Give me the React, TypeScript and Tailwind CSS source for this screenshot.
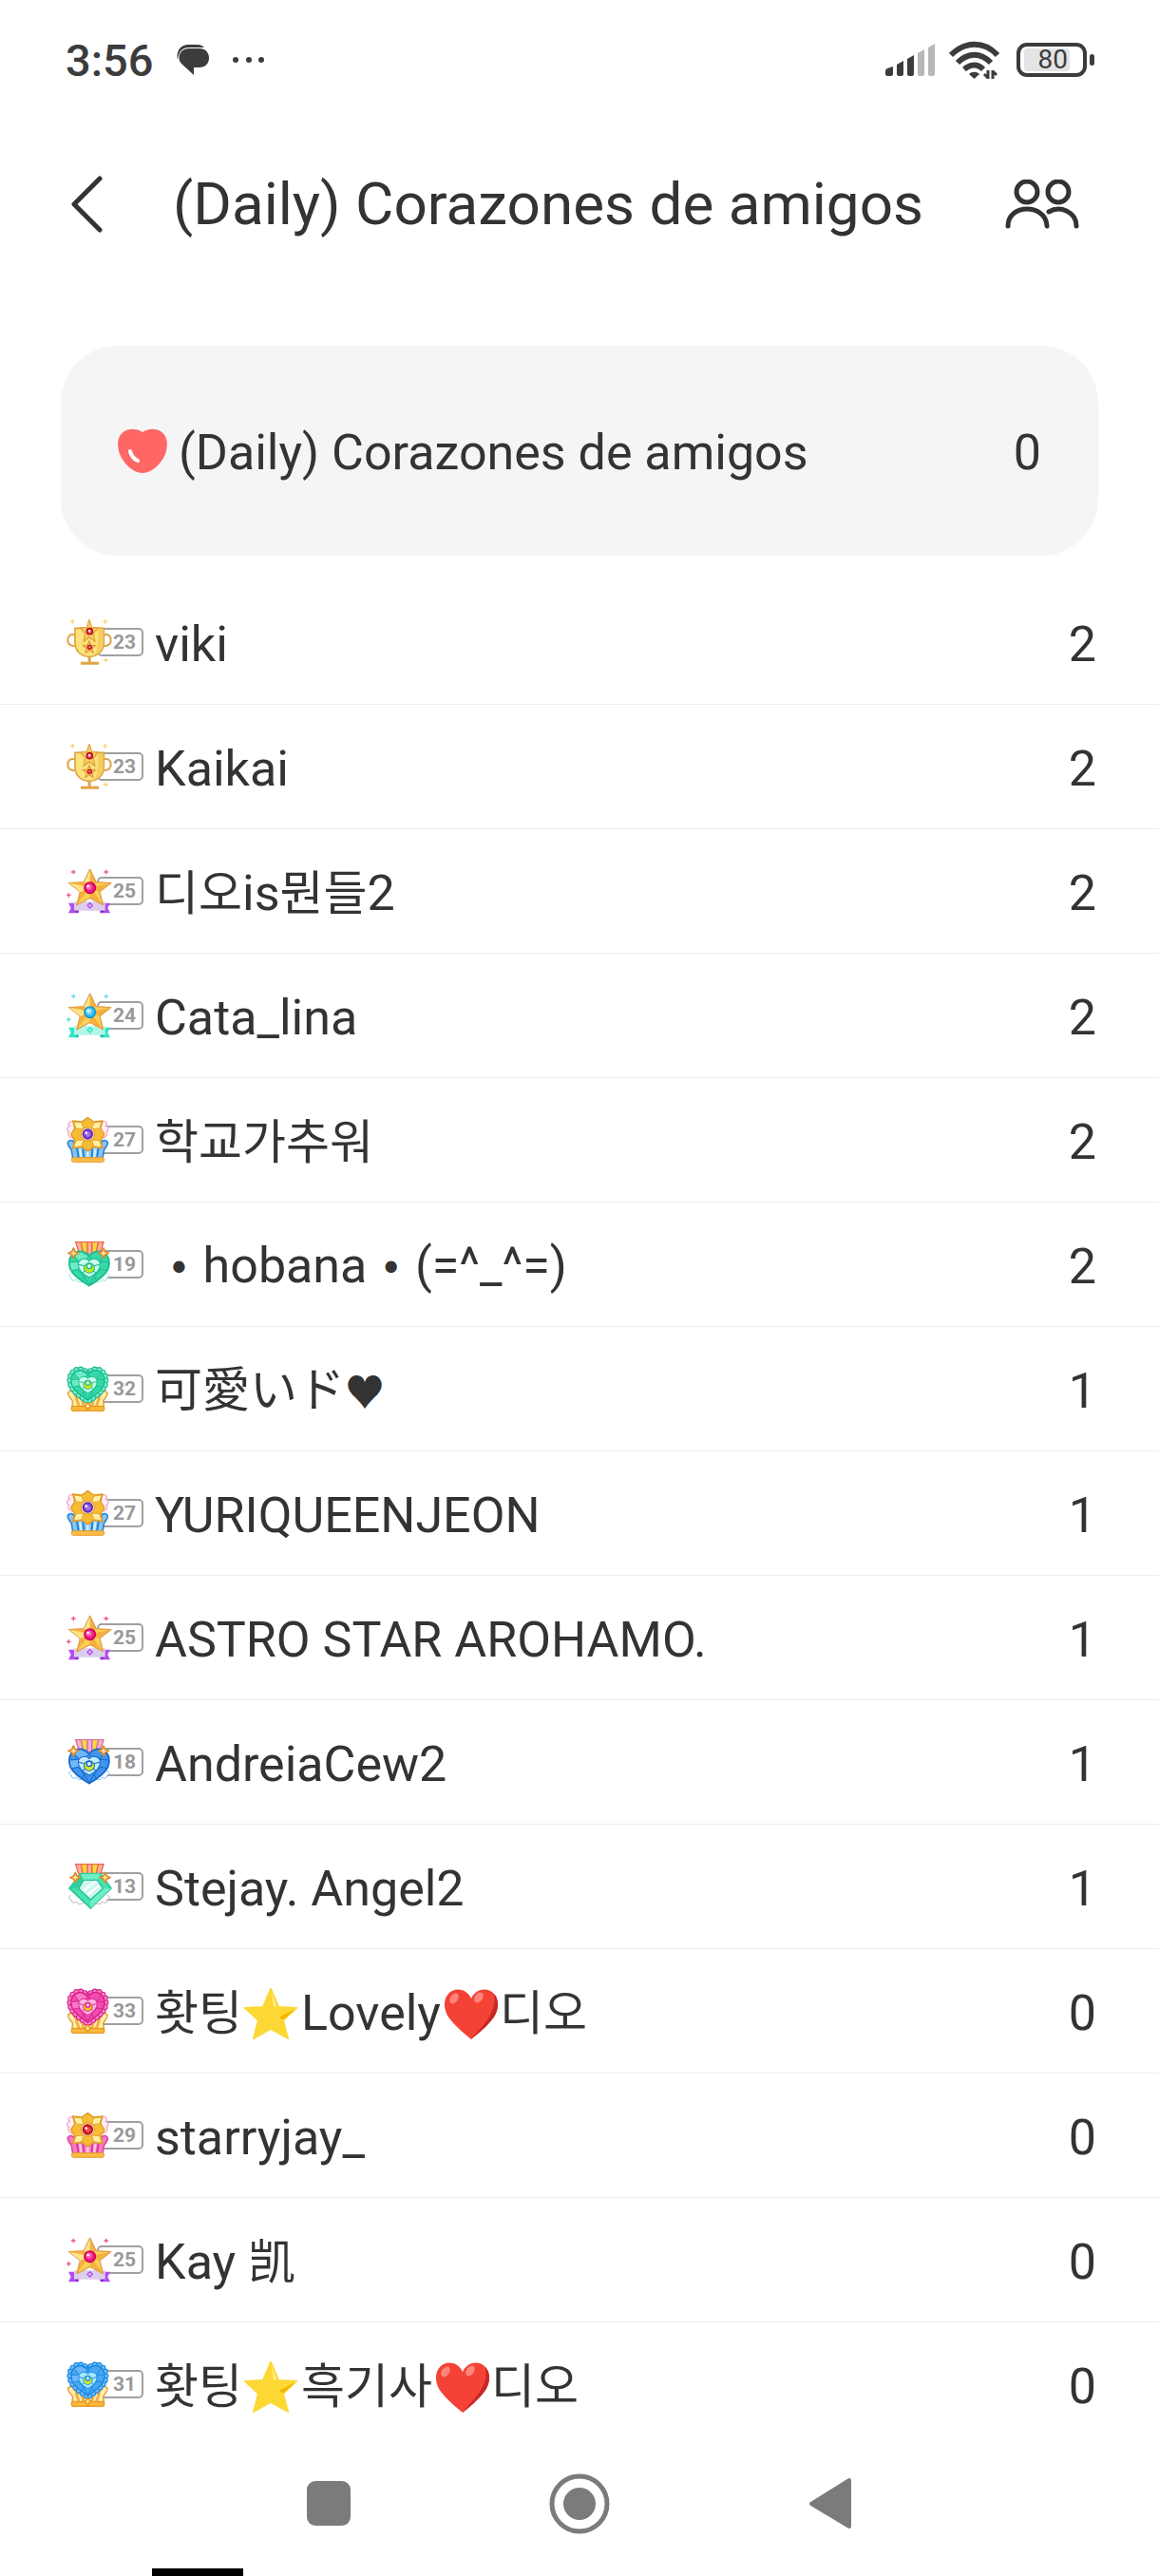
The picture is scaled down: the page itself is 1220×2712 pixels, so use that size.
import type { ReactNode } from 'react';

type Palette = { main: string; dark: string; light: string; pale: string; gem: string };

const teal: Palette = { main: '#35d9a8', dark: '#1cb98c', light: '#7df0d0', pale: '#c9fbec', gem: '#c6e81c' };
const blue: Palette = { main: '#3f95ee', dark: '#1769c6', light: '#7cc0fa', pale: '#c4ecff', gem: '#dbe81c' };
const sky: Palette = { main: '#4aa6f2', dark: '#0f8ae0', light: '#7cb8fa', pale: '#a8e6ff', gem: '#dbe81c' };
const pink: Palette = { main: '#f24aae', dark: '#d3208c', light: '#fb86cb', pale: '#ffb3df', gem: '#fbc21c' };

const HEART = 'M67 22C58 4 38 2 24 9C6 19 2 42 10 62C20 84 48 102 67 114C86 102 114 84 124 62C132 42 128 19 110 9C96 2 76 4 67 22Z';
const STAR = '0,-100 27,-36 95,-31 44,14 59,81 0,46 -59,81 -44,14 -95,-31 -27,-36';

function Plus({ x, y, color }: { x: number; y: number; color: string }) {
  return <path d={`M${x - 7} ${y}h14M${x} ${y - 7}v14`} stroke={color} strokeWidth="4" />;
}

function Sparkle({ x, y }: { x: number; y: number }) {
  return (
    <path
      d={`M${x} ${y - 16}l5 11 11 5-11 5-5 11-5-11-11-5 11-5z`}
      fill="#ffe0b0"
      stroke="#dc8a26"
      strokeWidth="5"
      strokeLinejoin="round"
    />
  );
}

function Trophy() {
  return (
    <>
      <Plus x={19} y={7} color="#f5d776" />
      <Plus x={122} y={7} color="#f5d776" />
      <Plus x={124} y={129} color="#f5d776" />
      <path d="M28 50C10 44 4 56 4 66C4 80 18 88 32 82M116 50C134 44 140 56 140 66C140 80 126 88 112 82" fill="none" stroke="#dfa544" strokeWidth="6" />
      <path d="M27 28H118V74C118 102 96 118 72 118C48 118 27 102 27 74Z" fill="#fbe27c" stroke="#dfa544" strokeWidth="5" />
      <path d="M100 32H114V74C114 92 104 106 88 112C98 96 100 76 100 32Z" fill="#f6cc5c" />
      <path d="M68 118h9v18h-9zM45 134h57v9h-57z" fill="#dfa544" />
      <polygon points={STAR} transform="translate(72 39) scale(.3 .38)" fill="#f8cf5e" stroke="#dfa040" strokeWidth="11" />
      <polygon points={STAR} transform="translate(72 89) scale(.21)" fill="#f8bf56" stroke="#e09c3c" strokeWidth="16" />
      <circle cx="73" cy="38" r="9" fill="#ef6b7c" stroke="#b80c1c" strokeWidth="5" />
      <circle cx="73" cy="88" r="6" fill="#ef7b7c" stroke="#b80c1c" strokeWidth="4" />
      <circle cx="72" cy="36" r="3" fill="#fff" />
    </>
  );
}

function StarRibbon({ kind }: { kind: 'purple' | 'aqua' }) {
  const p = kind === 'purple';
  const ribbon = p ? '#b24cf0' : '#2ce6c8';
  return (
    <>
      <Plus x={22} y={12} color={p ? '#f0559a' : '#74d6f2'} />
      <Plus x={125} y={12} color={p ? '#f0559a' : '#74d6f2'} />
      <Plus x={7} y={85} color={p ? '#f0559a' : '#4fe2dc'} />
      <path d="M6 110H38V142H6L14 126ZM138 110H106V142H138L130 126Z" fill={ribbon} />
      <path d="M24 106H122V134H24Z" fill={p ? '#dccdec' : '#b2f7e6'} />
      <path d="M24 134h16l-6 8zM122 134h-16l6 8z" fill={p ? '#8528c4' : '#12b89c'} />
      <polygon points={STAR} transform="translate(74 66) scale(.7 .62)" fill="#fcd052" stroke="#dd9f4c" strokeWidth="6" strokeLinejoin="round" />
      <path d="M74 6V61L92 44ZM139 47L74 61L104 75ZM115 115L74 61V94ZM33 115L74 61L44 75ZM9 47L74 61L56 44Z" fill="#f3a63a" opacity=".75" />
      <path d="M74 6V61L56 44ZM9 47L74 61L44 75Z" fill="#ffe994" opacity=".8" />
      <circle cx="74" cy="62" r="17" fill={p ? '#f51c84' : '#38c0f4'} stroke={p ? '#cc0460' : '#1298d8'} strokeWidth="5" />
      <circle cx="71" cy="59" r="9" fill={p ? '#ff66ae' : '#8fe2ff'} />
      <circle cx="68" cy="57" r="4" fill="#fff" />
      <path d="M74 110l8 8-8 8-8-8z" fill="none" stroke={ribbon} strokeWidth="4" />
    </>
  );
}

function FlowerCrown({ kind }: { kind: 'blue' | 'pink' }) {
  const b = kind === 'blue';
  return (
    <>
      <path
        d="M18 14C6 12 4 24 10 28C0 32 0 44 8 46C2 54 8 64 20 66H32V24ZM116 14C128 12 130 24 124 28C134 32 134 44 126 46C132 54 126 64 114 66H102V24Z"
        fill="#fff0f8"
        stroke="#f6a6cd"
        strokeWidth="4"
      />
      <path
        d="M4 80C8 70 22 72 24 82L40 92H94L110 82C112 72 126 70 130 80C132 92 122 94 118 106L114 130H20L16 106C12 94 2 92 4 80Z"
        fill={b ? '#8cc2f8' : '#f97cc4'}
        stroke={b ? '#2b86d2' : '#e0489c'}
        strokeWidth="5"
      />
      <path d="M32 92L38 130M102 92L96 130M52 100L54 130M82 100L80 130" stroke={b ? '#1d86da' : '#d93a94'} strokeWidth="6" />
      <path d="M43 100L47 128M91 100L87 128M67 104V128" stroke={b ? '#cdf2ff' : '#ffc1e2'} strokeWidth="8" />
      <rect x="16" y="128" width="103" height="14" rx="6" fill="#fbbc48" stroke="#e79b2c" strokeWidth="3" />
      <path
        d="M67 2L86 15L114 12L108 36L120 54L108 74L114 99L86 94L67 108L48 94L20 99L26 74L14 54L26 36L20 12L48 15Z"
        fill="#f8bc34"
        stroke="#dc9a28"
        strokeWidth="4"
        strokeLinejoin="round"
      />
      <path d="M23 15L48 18L54 38L30 36ZM111 15L86 18L80 38L104 36ZM23 96L48 92L54 72L30 74ZM111 96L86 92L80 72L104 74Z" fill="#fff0a4" stroke="#e5a834" strokeWidth="3" />
      <circle cx="67" cy="54" r="21" fill="#fde9d8" stroke="#dc9a28" strokeWidth="3" />
      <circle cx="67" cy="54" r="15" fill={b ? '#8348d8' : '#e0242c'} stroke={b ? '#5c22a8' : '#a80c14'} strokeWidth="4" />
      <circle cx="68" cy="55" r="7" fill={b ? '#a878f0' : '#f4505a'} />
      <circle cx="62" cy="50" r="4" fill="#fff" />
    </>
  );
}

function HeartJewel({ c }: { c: Palette }) {
  return (
    <>
      <path d={HEART} fill={c.main} stroke={c.dark} strokeWidth="5" />
      <path d="M67 24L40 8L18 18L36 38ZM36 38L8 40L14 66L34 62Z" fill={c.light} opacity=".8" />
      <path d="M67 24L36 38L8 40M36 38L18 16M34 62L14 66M34 62L52 84L46 98M67 24L98 38L126 40M98 38L116 16M100 62L120 66M100 62L82 84L88 98M52 84L67 112L82 84" fill="none" stroke={c.dark} strokeWidth="3" />
      <path d="M67 36C58 24 38 28 34 42C32 62 44 76 67 88C90 76 102 62 100 42C96 28 76 24 67 36Z" fill={c.pale} stroke={c.dark} strokeWidth="3" />
      <path d="M34 46L54 52M100 46L80 52M46 74L56 66M88 74L78 66" stroke={c.dark} strokeWidth="3" />
      <circle cx="67" cy="58" r="16" fill={c.gem} stroke={c.dark} strokeWidth="3" />
      <circle cx="67" cy="52" r="8" fill={c.pale} stroke={c.dark} strokeWidth="4" />
      <circle cx="67" cy="51" r="3" fill="#fff" />
    </>
  );
}

function MedalRibbon({ tint }: { tint: 'coral' | 'rose' }) {
  return (
    <>
      <path d="M29 2H117L105 40H41Z" fill={tint === 'coral' ? '#ffb0a0' : '#f8b0d4'} stroke={tint === 'coral' ? '#e86654' : '#d8709c'} strokeWidth="4" />
      <path d="M48 4H62V38H54ZM98 4H84V38H92Z" fill="#f9da28" />
      <path d="M46 4L53 38M66 4V38M80 4V38M100 4L93 38" stroke={tint === 'coral' ? '#e2683c' : '#c868a0'} strokeWidth="4" />
    </>
  );
}

function Wings({ color }: { color: string }) {
  return (
    <path
      d="M14 100C4 104 8 114 16 114C14 124 26 126 32 120C34 130 48 130 54 122M128 100C140 104 136 114 128 114C130 124 118 126 112 120C110 130 96 130 90 122"
      fill="#fff"
      stroke={color}
      strokeWidth="3"
    />
  );
}

function HeartMedal({ c, tint }: { c: Palette; tint: 'coral' | 'rose' }) {
  return (
    <>
      <MedalRibbon tint={tint} />
      <Wings color={c.light} />
      <g transform="translate(2 26) scale(1.04 1)">
        <HeartJewel c={c} />
      </g>
      <Sparkle x={22} y={37} />
      <Sparkle x={117} y={37} />
    </>
  );
}

function GemMedal() {
  return (
    <>
      <MedalRibbon tint="coral" />
      <Wings color="#b4b8bc" />
      <path d="M45 32H107L141 78L76 141L9 78Z" fill="#46e2b0" stroke="#26c294" strokeWidth="5" strokeLinejoin="round" />
      <path d="M45 32L54 52L40 79L9 78Z" fill="#2fcf9e" />
      <path d="M45 32H107L98 52H54ZM141 78L113 79L76 114V141Z" fill="#7bf2cc" opacity=".8" />
      <path d="M54 52H98L115 79L76 114L38 79Z" fill="#cdf8ee" stroke="#26c294" strokeWidth="4" />
      <path d="M54 86L92 56M66 98L104 70" stroke="#fff" strokeWidth="7" />
      <Sparkle x={28} y={44} />
      <Sparkle x={122} y={44} />
    </>
  );
}

function HeartCrown({ c }: { c: Palette }) {
  return (
    <>
      <path
        d="M5 86C8 78 20 78 24 88C28 104 46 104 67 104C88 104 106 104 110 88C114 78 126 78 129 86C130 98 120 100 116 112L118 128H18L20 112C14 100 4 98 5 86Z"
        fill="#fff0b4"
        stroke="#e8a636"
        strokeWidth="5"
      />
      <path d="M30 100L40 128M104 100L94 128M50 110L54 128M84 110L80 128" stroke="#f2b040" strokeWidth="9" />
      <rect x="16" y="128" width="103" height="14" rx="6" fill="#fbb93c" stroke="#e59a26" strokeWidth="4" />
      {/* lace edge: rows of round dots behind the heart */}
      <g transform="translate(5 6) scale(.93)" fill="none" strokeLinecap="round" strokeDasharray="0 15">
        <path d={HEART} stroke={c.dark} strokeWidth="20" />
        <path d={HEART} stroke={c.light} strokeWidth="13" />
      </g>
      <g transform="translate(9 9) scale(.87)">
        <HeartJewel c={c} />
      </g>
      <path d="M67 116l9 11-9 11-9-11z" fill="#ffe08c" stroke="#e08c1c" strokeWidth="4" />
    </>
  );
}

const badges: Record<string, ReactNode> = {
  trophy: <Trophy />,
  starPurple: <StarRibbon kind="purple" />,
  starAqua: <StarRibbon kind="aqua" />,
  flowerBlue: <FlowerCrown kind="blue" />,
  flowerPink: <FlowerCrown kind="pink" />,
  heartTeal: <HeartMedal c={teal} tint="coral" />,
  heartBlue: <HeartMedal c={blue} tint="rose" />,
  gem: <GemMedal />,
  crownTeal: <HeartCrown c={teal} />,
  crownPink: <HeartCrown c={pink} />,
  crownSky: <HeartCrown c={sky} />,
};

function LevelBadge({ icon, level }: { icon: string; level: number }) {
  return (
    <div className="flex shrink-0 items-center">
      <svg viewBox="0 0 144 144" className="relative z-10 size-12" aria-hidden="true">
        {badges[icon]}
      </svg>
      <span className="-ml-4 flex h-[30px] w-[49px] items-center justify-end rounded-[5px] border-2 border-[#a0a0a0] bg-white pr-1.5 text-[21px] leading-none font-bold text-[#999]">
        {level}
      </span>
    </div>
  );
}

function StarEmoji() {
  return (
    <svg viewBox="0 0 56 56" className="mr-1 ml-0.5 size-14" role="img" aria-label="⭐">
      <path d="M28 2L36 21L55 22L41 35L46 54L28 44L10 54L15 35L1 22L20 21Z" fill="#fdd835" stroke="#fdd835" strokeWidth="2" strokeLinejoin="round" />
      <path d="M29 6L31 20L34 21Z" fill="#fff59d" />
      <path d="M54 23L38 31C37 34 41 35 44 32Z" fill="#f4b400" />
    </svg>
  );
}

function HeartEmoji() {
  return (
    <svg viewBox="0 0 60 56" className="ml-0.5 h-14 w-[60px]" role="img" aria-label="❤️">
      <path d="M30 12C25 1 12 0 6 7C-1 15 2 27 8 34C14 42 24 50 30 55C36 50 46 42 52 34C58 27 61 15 54 7C48 0 35 1 30 12Z" fill="#f44336" />
      <path d="M54 7C61 15 58 27 52 34C46 42 36 50 30 55C40 42 58 28 54 7Z" fill="#c62828" />
      <ellipse cx="12" cy="12" rx="4" ry="6" transform="rotate(35 12 12)" fill="#ff847a" />
      <ellipse cx="38" cy="11" rx="4" ry="6" transform="rotate(35 38 11)" fill="#ff847a" />
    </svg>
  );
}

function Cjk({ children }: { children: ReactNode }) {
  return <span className="text-[50px]">{children}</span>;
}

function Bullet() {
  return <span className="font-['DejaVu_Sans',sans-serif] text-[42px]">•</span>;
}

const friends: { icon: string; level: number; name: ReactNode; hearts: number }[] = [
  { icon: 'trophy', level: 23, name: 'viki', hearts: 2 },
  { icon: 'trophy', level: 23, name: 'Kaikai', hearts: 2 },
  { icon: 'starPurple', level: 25, name: <><Cjk>디오</Cjk>is<Cjk>뭔들</Cjk>2</>, hearts: 2 },
  { icon: 'starAqua', level: 24, name: 'Cata_lina', hearts: 2 },
  { icon: 'flowerBlue', level: 27, name: <Cjk>학교가추워</Cjk>, hearts: 2 },
  { icon: 'heartTeal', level: 19, name: <>{'\u00a0'}<Bullet />{' hobana '}<Bullet />{' (=^_^=)'}</>, hearts: 2 },
  { icon: 'crownTeal', level: 32, name: <><Cjk>可愛いド</Cjk><span className="text-[42px]">♥</span></>, hearts: 1 },
  { icon: 'flowerBlue', level: 27, name: 'YURIQUEENJEON', hearts: 1 },
  { icon: 'starPurple', level: 25, name: 'ASTRO STAR AROHAMO.', hearts: 1 },
  { icon: 'heartBlue', level: 18, name: 'AndreiaCew2', hearts: 1 },
  { icon: 'gem', level: 13, name: 'Stejay. Angel2', hearts: 1 },
  { icon: 'crownPink', level: 33, name: <><Cjk>홧팅</Cjk><StarEmoji />Lovely<HeartEmoji /><Cjk>디오</Cjk></>, hearts: 0 },
  { icon: 'flowerPink', level: 29, name: 'starryjay_', hearts: 0 },
  { icon: 'starPurple', level: 25, name: <>Kay <Cjk>凯</Cjk></>, hearts: 0 },
  { icon: 'crownSky', level: 31, name: <><Cjk>홧팅</Cjk><StarEmoji /><Cjk>흑기사</Cjk><HeartEmoji /><Cjk>디오</Cjk></>, hearts: 0 },
];

function StatusBar() {
  return (
    <div className="flex h-[126px] items-center justify-between pr-[68px] pl-[69px] text-[#3c3c3c]">
      <div className="flex items-center">
        <span className="text-[47px] leading-none font-medium">3:56</span>
        <svg viewBox="0 0 34 34" className="ml-6 size-[34px]" fill="currentColor" aria-hidden="true">
          <path d="M13 5H24C30 5 34 9 34 15C34 21 30 25 24 25H18V33L6 22C3 19 2.500 17 2.500 15C2.500 9 7 5 13 5Z" />
          <path d="M1 17C-1 8 4 1 12 1H22C25 1 27 2 29 4H13C6 4 2 8 1 17Z" />
        </svg>
        <svg viewBox="0 0 36 8" className="ml-6 h-2 w-9" fill="currentColor" aria-hidden="true">
          <circle cx="4" cy="4" r="3" />
          <circle cx="18" cy="4" r="3" />
          <circle cx="31" cy="4" r="3" />
        </svg>
      </div>
      <div className="flex items-center">
        <svg viewBox="0 0 52 34" className="h-[34px] w-[52px]" fill="currentColor" aria-hidden="true">
          <path d="M0 29Q0 27 2 26L8 24V32Q8 34 6 34H2Q0 34 0 32ZM12 22L19 18V32Q19 34 17 34H14Q12 34 12 32ZM23 16L30 12V32Q30 34 28 34H25Q23 34 23 32Z" />
          <path d="M34 10L41 6V32Q41 34 39 34H36Q34 34 34 32ZM45 4L52 0V32Q52 34 50 34H47Q45 34 45 32Z" fill="#b8b8b8" />
        </svg>
        <svg viewBox="0 0 53 40" className="ml-[15px] h-10 w-[53px]" fill="none" stroke="currentColor" strokeWidth="6" aria-hidden="true">
          <path d="M2 15C17 0 37 0 51 15M9 23C20 12 33 12 44 23M16 30C23 24 30 24 36 30" />
          <path d="M21 35C24 32 29 32 32 35L26.500 40Z" fill="currentColor" stroke="none" />
          <path d="M41 31V40M46 40V31M41 39L37 35M46 32L50 36" strokeWidth="3" />
        </svg>
        <div className="ml-[18px] flex items-center">
          <div className="flex h-9 w-[74px] items-center rounded-[11px] border-4 border-current p-1">
            <span className="flex h-6 w-12 items-center justify-end rounded-sm bg-[#e4e4e4] pr-0.5 text-[28px] leading-none">80</span>
          </div>
          <span className="ml-[3px] h-3 w-[5px] rounded-sm bg-current" />
        </div>
      </div>
    </div>
  );
}

export default function App() {
  return (
    <div className="bg-white font-[Roboto,'Noto_Sans_CJK_KR','Noto_Sans_CJK_SC',sans-serif] text-[#333]">
      <StatusBar />

      <header className="flex h-[178px] items-center pr-[84px] pl-[74px]">
        <button type="button" aria-label="Atrás">
          <svg viewBox="0 0 34 60" className="h-[60px] w-[34px]" fill="none" stroke="currentColor" strokeWidth="5" strokeLinecap="round" strokeLinejoin="round">
            <path d="M31 3L4 30L31 57" />
          </svg>
        </button>
        <h1 className="ml-[74px] flex-1 text-[62px] leading-none whitespace-nowrap">(Daily) Corazones de amigos</h1>
        <button type="button" aria-label="Amigos">
          <svg viewBox="0 0 78 52" className="h-[52px] w-[78px]" fill="none" stroke="currentColor" strokeWidth="5" strokeLinecap="round">
            <circle cx="23" cy="13" r="11" />
            <circle cx="56" cy="13" r="11" />
            <path d="M3 49C3 25 43 25 44 49M46 34C58 27 75 34 75 49" />
          </svg>
        </button>
      </header>

      <main>
        <section className="mx-16 mt-15 flex h-[221px] items-center justify-between rounded-[60px] bg-[#f5f5f5] px-[60px] text-[52px] leading-none">
          <div className="flex items-center">
            <svg viewBox="0 0 52 47" className="mr-3 h-[47px] w-[52px]" aria-hidden="true">
              <path d="M26 4C20 0 12 0 7 3C-1 8-1 18 2 27C6 37 16 47 26 47C36 47 46 37 50 27C53 18 53 8 45 3C40 0 32 0 26 4Z" fill="#ff6666" />
              <path d="M13 24C14 29 17 32 21 34" fill="none" stroke="#fff" strokeWidth="4" strokeLinecap="round" />
            </svg>
            <h2 className="pt-1">(Daily) Corazones de amigos</h2>
          </div>
          <span className="pt-1">0</span>
        </section>

        <ul className="mt-[26px]">
          {friends.map((f, i) => (
            <li key={i} className="flex h-[131px] items-center border-b border-[#ececec] pr-[66px] pl-[70px] text-[52px] leading-[60px] last:border-transparent">
              <LevelBadge icon={f.icon} level={f.level} />
              <span className="ml-3 flex flex-1 items-baseline pt-1.5 whitespace-pre [&>svg]:self-center">{f.name}</span>
              <span className="pt-1.5">{f.hearts}</span>
            </li>
          ))}
        </ul>
      </main>

      <nav className="flex justify-center gap-[200px] py-7 text-[#7b7b7b]">
        <button type="button" aria-label="Recientes">
          <svg viewBox="0 0 64 64" className="size-16" fill="currentColor">
            <rect x="9" y="8" width="46" height="47" rx="9" />
          </svg>
        </button>
        <button type="button" aria-label="Inicio">
          <svg viewBox="0 0 64 64" className="size-16" fill="currentColor">
            <circle cx="32" cy="32" r="29" fill="none" stroke="currentColor" strokeWidth="5" />
            <circle cx="32" cy="32" r="17" />
          </svg>
        </button>
        <button type="button" aria-label="Volver">
          <svg viewBox="0 0 64 64" className="size-16" fill="currentColor" stroke="currentColor" strokeWidth="4" strokeLinejoin="round">
            <path d="M52 7V56L12 32Z" />
          </svg>
        </button>
      </nav>
      <div className="mt-2 ml-40 h-2 w-24 bg-black" />
    </div>
  );
}
